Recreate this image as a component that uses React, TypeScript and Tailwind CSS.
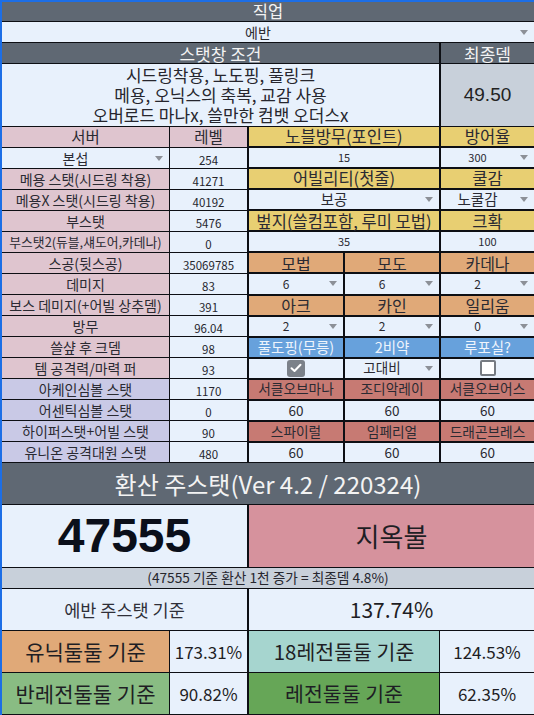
import React from "react";

const Arrow = () => (
  <span className="flex w-[20px] shrink-0 items-center justify-center">
    <span className="h-0 w-0 border-x-[4px] border-t-[5px] border-x-transparent border-t-[#8c9097]" />
  </span>
);

function Drop({ children, className = "" }: { children: React.ReactNode; className?: string }) {
  return (
    <div className={`flex items-center bg-[#e8f1fc] leading-none ${className}`}>
      <span className="flex-1 text-center">{children}</span>
      <Arrow />
    </div>
  );
}

function H({ children, className = "" }: { children: React.ReactNode; className?: string }) {
  return (
    <div className={`flex items-center justify-center whitespace-nowrap leading-none ${className}`}>
      {children}
    </div>
  );
}

const pinkRows: [string, string, string][] = [
  ["메용 스탯(시드링 착용)", "41271", "text-[14px]"],
  ["메용X 스탯(시드링 착용)", "40192", "text-[14px]"],
  ["부스탯", "5476", "text-[14px]"],
  ["부스탯2(듀블,섀도어,카데나)", "0", "text-[12.8px]"],
  ["스공(뒷스공)", "35069785", "text-[14px]"],
  ["데미지", "83", "text-[14px]"],
  ["보스 데미지(+어빌 상추뎀)", "391", "text-[14px]"],
  ["방무", "96.04", "text-[14px]"],
  ["쓸샾 후 크뎀", "98", "text-[14px]"],
  ["템 공격력/마력 퍼", "93", "text-[14px]"],
];

const purpleRows: [string, string][] = [
  ["아케인심볼 스탯", "1170"],
  ["어센틱심볼 스탯", "0"],
  ["하이퍼스탯+어빌 스탯", "90"],
  ["유니온 공격대원 스탯", "480"],
];

function Num({ children }: { children: React.ReactNode }) {
  return (
    <div className="flex items-end justify-center bg-[#e8f1fc] pb-[1px] text-[11.5px] leading-[14px] text-[#26262e]">
      {children}
    </div>
  );
}

export default function App() {
  return (
    <div className="flex h-[715px] w-[534px] flex-col gap-px overflow-hidden border-l-2 border-t-2 border-[#1c6ee6] bg-[#0d0f14] pb-px font-['Noto_Sans_CJK_KR',sans-serif] text-[#2a2a32]">
      {/* 직업 */}
      <H className="h-[19px] shrink-0 bg-[#5f6873] text-[16.5px] text-[#f3f3f3]">직업</H>
      <div className="flex h-[20px] shrink-0 items-center bg-[#e8f1fc] text-[14px] leading-none">
        <span className="flex-1 text-center">에반</span>
        <Arrow />
      </div>

      {/* 스탯창 조건 */}
      <div className="flex h-[20px] shrink-0 gap-[2px]">
        <H className="flex-1 bg-[#5f6873] text-[17px] text-[#f3f3f3]">스탯창 조건</H>
        <H className="w-[93px] bg-[#5f6873] text-[17px] text-[#f3f3f3]">최종뎀</H>
      </div>
      <div className="flex h-[62px] shrink-0 gap-[2px]">
        <div className="flex flex-1 flex-col items-center justify-center bg-[#e8f1fc] text-[17px] leading-[20px] text-[#26262e]">
          <span>시드링착용, 노도핑, 풀링크</span>
          <span>메용, 오닉스의 축복, 교감 사용</span>
          <span>오버로드 마나x, 쓸만한 컴뱃 오더스x</span>
        </div>
        <div className="flex w-[93px] items-center justify-center bg-[#c8d0da] font-['Liberation_Sans',sans-serif] text-[19px] text-[#222]">
          49.50
        </div>
      </div>

      {/* main grid */}
      <div className="flex h-[335px] shrink-0 gap-[2px]">
        <div className="grid grid-cols-[167px_77px] grid-rows-[repeat(16,20px)] gap-px">
          <H className="bg-[#dfc5cf] text-[15.5px]">서버</H>
          <H className="bg-[#dfc5cf] text-[15.5px]">레벨</H>
          <Drop className="text-[14px]">본섭</Drop>
          <Num>254</Num>
          {pinkRows.map(([l, v, s]) => (
            <React.Fragment key={l}>
              <H className={`bg-[#dfc5cf] ${s}`}>{l}</H>
              <Num>{v}</Num>
            </React.Fragment>
          ))}
          {purpleRows.map(([l, v]) => (
            <React.Fragment key={l}>
              <H className="bg-[#c9c9e6] text-[14px]">{l}</H>
              <Num>{v}</Num>
            </React.Fragment>
          ))}
        </div>

        <div className="grid flex-1 grid-cols-[94px_94px_1fr] grid-rows-[repeat(16,minmax(0,1fr))] gap-[2px]">
          <H className="col-span-2 bg-[#e8cf72] text-[16.5px]">노블방무(포인트)</H>
          <H className="bg-[#e8cf72] text-[16.5px]">방어율</H>
          <H className="col-span-2 bg-[#e8f1fc] text-[11px]">15</H>
          <Drop className="text-[11px]">300</Drop>

          <H className="col-span-2 bg-[#e8cf72] text-[16.5px]">어빌리티(첫줄)</H>
          <H className="bg-[#e8cf72] text-[16.5px]">쿨감</H>
          <Drop className="col-span-2 text-[14.5px]">보공</Drop>
          <Drop className="text-[14.5px]">노쿨감</Drop>

          <H className="col-span-2 bg-[#e8cf72] text-[16.5px]">벞지(쓸컴포함, 루미 모법)</H>
          <H className="bg-[#e8cf72] text-[16.5px]">크확</H>
          <H className="col-span-2 bg-[#e8f1fc] text-[11px]">35</H>
          <H className="bg-[#e8f1fc] text-[11px]">100</H>

          <H className="bg-[#e0a978] text-[16px]">모법</H>
          <H className="bg-[#e0a978] text-[16px]">모도</H>
          <H className="bg-[#e0a978] text-[16px]">카데나</H>
          <Drop className="text-[12px]">6</Drop>
          <Drop className="text-[12px]">6</Drop>
          <Drop className="text-[12px]">2</Drop>

          <H className="bg-[#e0a978] text-[16px]">아크</H>
          <H className="bg-[#e0a978] text-[16px]">카인</H>
          <H className="bg-[#e0a978] text-[16px]">일리움</H>
          <Drop className="text-[12px]">2</Drop>
          <Drop className="text-[12px]">2</Drop>
          <Drop className="text-[12px]">0</Drop>

          <H className="bg-[#67a1dc] text-[14.5px] text-[#eef4fc]">풀도핑(무릉)</H>
          <H className="bg-[#67a1dc] text-[14.5px] text-[#eef4fc]">2비약</H>
          <H className="bg-[#67a1dc] text-[14.5px] text-[#eef4fc]">루포실?</H>
          <H className="bg-[#e8f1fc]">
            <span className="flex h-[17px] w-[18px] items-center justify-center rounded-[3px] bg-[#7b8189]">
              <svg width="12" height="10" viewBox="0 0 12 10" fill="none">
                <path d="M1.5 5.2 L4.5 8 L10.5 1.8" stroke="#fff" strokeWidth="2" strokeLinecap="round" strokeLinejoin="round" />
              </svg>
            </span>
          </H>
          <Drop className="text-[13.5px]">고대비</Drop>
          <H className="bg-[#e8f1fc]">
            <span className="h-[16px] w-[16px] rounded-[2px] border-2 border-[#767b82] bg-white" />
          </H>

          <H className="bg-[#c77a73] text-[13.7px]">서클오브마나</H>
          <H className="bg-[#c77a73] text-[13.7px]">조디악레이</H>
          <H className="bg-[#c77a73] text-[13.7px]">서클오브어스</H>
          <H className="bg-[#e8f1fc] text-[13.5px]">60</H>
          <H className="bg-[#e8f1fc] text-[13.5px]">60</H>
          <H className="bg-[#e8f1fc] text-[13.5px]">60</H>

          <H className="bg-[#c77a73] text-[13.7px]">스파이럴</H>
          <H className="bg-[#c77a73] text-[13.7px]">임페리얼</H>
          <H className="bg-[#c77a73] text-[13.7px]">드래곤브레스</H>
          <H className="bg-[#e8f1fc] text-[13.5px]">60</H>
          <H className="bg-[#e8f1fc] text-[13.5px]">60</H>
          <H className="bg-[#e8f1fc] text-[13.5px]">60</H>
        </div>
      </div>

      {/* 환산 주스탯 */}
      <H className="h-[41px] shrink-0 bg-[#5f6873] text-[24px] text-[#f3f3f3]">환산 주스탯(Ver 4.2 / 220324)</H>
      <div className="flex h-[62px] shrink-0 gap-[2px]">
        <div className="flex w-[245px] items-center justify-center bg-[#e8f1fc] font-['Liberation_Sans',sans-serif] text-[48px] font-bold text-[#0b0f1a]">
          47555
        </div>
        <H className="flex-1 bg-[#d6929d] text-[26px] text-[#1e1e24]">지옥불</H>
      </div>
      <H className="h-[20px] shrink-0 bg-[#c8d0da] text-[13.7px] text-[#26262e]">(47555 기준 환산 1천 증가 = 최종뎀 4.8%)</H>

      <div className="flex h-[41px] shrink-0 gap-[2px]">
        <H className="w-[245px] bg-[#e8f1fc] text-[17.5px] text-[#2f2f38]">에반 주스탯 기준</H>
        <H className="flex-1 bg-[#e8f1fc] text-[21px] text-[#1e1e24]">137.74%</H>
      </div>
      <div className="flex h-[41px] shrink-0 gap-px">
        <H className="w-[167px] bg-[#e0a978] text-[21px] text-[#1e1e24]">유닉둘둘 기준</H>
        <H className="w-[77px] bg-[#e8f1fc] text-[17px] text-[#1e1e24]">173.31%</H>
        <H className="ml-px w-[190px] bg-[#a6d5cf] text-[20.5px] text-[#1e1e24]">18레전둘둘 기준</H>
        <H className="flex-1 bg-[#e8f1fc] text-[17px] text-[#1e1e24]">124.53%</H>
      </div>
      <div className="flex h-[41px] shrink-0 gap-px">
        <H className="w-[167px] bg-[#89bc83] text-[21px] text-[#1e1e24]">반레전둘둘 기준</H>
        <H className="w-[77px] bg-[#e8f1fc] text-[17px] text-[#1e1e24]">90.82%</H>
        <H className="ml-px w-[190px] bg-[#66a657] text-[20.5px] text-[#1e1e24]">레전둘둘 기준</H>
        <H className="flex-1 bg-[#e8f1fc] text-[17px] text-[#1e1e24]">62.35%</H>
      </div>
    </div>
  );
}
